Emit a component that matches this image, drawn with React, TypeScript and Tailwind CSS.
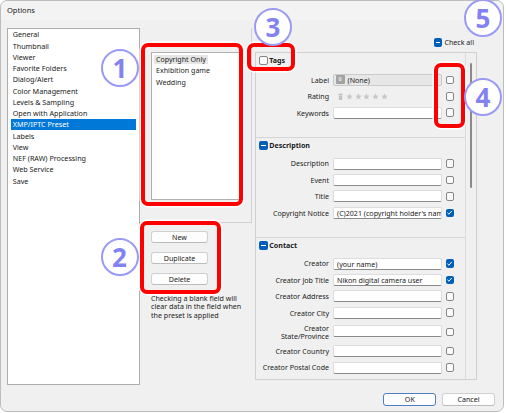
import React from "react";

const Box = ({ checked }: { checked?: boolean }) =>
  checked ? (
    <span className="flex h-[8.5px] w-[8.5px] shrink-0 items-center justify-center rounded-[2px] bg-[#005fb8]">
      <svg viewBox="0 0 10 10" className="h-[7px] w-[7px]">
        <path d="M2 5.3 L4.2 7.4 L8.2 2.8" stroke="white" strokeWidth="1.4" fill="none" />
      </svg>
    </span>
  ) : (
    <span className="block h-[8.5px] w-[8.5px] shrink-0 rounded-[2px] border border-[#858585] bg-[#fbfbfb]" />
  );

const Minus = () => (
  <span className="flex h-[8.5px] w-[8.5px] shrink-0 items-center justify-center rounded-[2px] bg-[#005fb8]">
    <span className="block h-[1.2px] w-[4.5px] bg-white" />
  </span>
);

const Field = ({ text }: { text?: string }) => (
  <div className="h-[12px] w-[109px] overflow-hidden whitespace-nowrap rounded-[2px] border border-[#dcdcdc] border-b-[#8a8a8a] bg-white px-[3px] leading-[10.5px]">
    {text}
  </div>
);

const Row = ({
  label,
  children,
  checked,
  h = "h-[16.4px]",
}: {
  label: React.ReactNode;
  children: React.ReactNode;
  checked?: boolean;
  h?: string;
}) => (
  <div className={`flex ${h} items-center`}>
    <div className="w-[77px] shrink-0 pr-[4px] text-right leading-[8.4px]">{label}</div>
    {children}
    <div className="ml-[3.7px]">
      <Box checked={checked} />
    </div>
  </div>
);

const Header = ({ title, minus }: { title: string; minus?: boolean }) => (
  <div className="flex h-[15px] items-center gap-[1.8px] pl-[3px] font-bold">
    {minus ? <Minus /> : <Box />}
    <span>{title}</span>
  </div>
);

const Star = () => (
  <svg viewBox="0 0 10 10" className="h-[7px] w-[7px]">
    <polygon points="5,0.5 6.3,3.6 9.6,3.8 7.1,6 7.9,9.3 5,7.5 2.1,9.3 2.9,6 0.4,3.8 3.7,3.6" fill="#c8c8c8" />
  </svg>
);

const RedBox = ({ c }: { c: string }) => (
  <div className={`pointer-events-none absolute rounded-[7px] border-[4px] border-[#ff0000] shadow-[0_0_0_1.5px_#ffffff] ${c}`} />
);

const Circle = ({ n, c }: { n: string; c: string }) => (
  <div
    className={`absolute flex h-[38px] w-[38px] items-center justify-center rounded-full border-[2.5px] border-[#9a9af5] bg-white text-[26px] font-bold leading-none text-[#8282f0] ${c}`}
  >
    {n}
  </div>
);

const navItems = [
  "General",
  "Thumbnail",
  "Viewer",
  "Favorite Folders",
  "Dialog/Alert",
  "Color Management",
  "Levels & Sampling",
  "Open with Application",
  "XMP/IPTC Preset",
  "Labels",
  "View",
  "NEF (RAW) Processing",
  "Web Service",
  "Save",
];

export default function App() {
  return (
    <div className="h-[413px] w-[506px] bg-white font-['Noto_Sans','Open_Sans',sans-serif] text-[7.1px] text-[#1b1b1b]">
      <div className="relative flex h-[412px] w-[504px] flex-col rounded-[7px] border border-[#bdbdbd] bg-[#f0f0f0]">
        {/* title bar */}
        <div className="flex h-[19px] items-center rounded-t-[7px] bg-[#f3f3f3] pl-[6px] text-[7.5px]">Options</div>

        {/* body */}
        <div className="flex pt-[8px]">
          {/* nav list */}
          <div className="ml-[6px] h-[357px] w-[133px] border border-[#adadad] bg-white">
            {navItems.map((it) => (
              <div
                key={it}
                className={`mx-[3px] flex h-[11.27px] items-center pl-[1.7px] text-[7.2px] ${
                  it === "XMP/IPTC Preset" ? "bg-[#0078d7] text-white" : ""
                }`}
              >
                {it}
              </div>
            ))}
          </div>

          {/* middle column */}
          <div className="w-[115px]">
            <div className="h-[195px] w-[112px] border-b border-r border-[#d2d2d2] pl-[11px] pt-[24px]">
              <div className="h-[148px] w-[89px] border border-[#b0b0b0] bg-white pt-[1px]">
                {["Copyright Only", "Exhibition game", "Wedding"].map((p, i) => (
                  <div key={p} className="flex h-[11.3px] items-center pl-[2px]">
                    <span className={`px-[2px] leading-[9.3px] ${i === 0 ? "bg-[#e6e6e6]" : ""}`}>{p}</span>
                  </div>
                ))}
              </div>
            </div>
            <div className="flex flex-col gap-[9px] pl-[11px] pt-[8px]">
              {["New", "Duplicate", "Delete"].map((b) => (
                <div
                  key={b}
                  className="flex h-[12px] w-[57px] items-center justify-center rounded-[3px] border border-[#d0d0d0] border-b-[#bcbcbc] bg-[#fdfdfd]"
                >
                  {b}
                </div>
              ))}
            </div>
            <div className="whitespace-nowrap pl-[11px] pt-[8.6px] leading-[8.7px]">
              Checking a blank field will
              <br />
              clear data in the field when
              <br />
              the preset is applied
            </div>
          </div>

          {/* right column */}
          <div className="w-[222px]">
            <div className="mt-[10px] flex h-[9px] items-center justify-end gap-[2px] pr-[3px]">
              <Minus />
              <span>Check all</span>
            </div>
            <div className="mt-[5px] flex h-[328px] w-[222px] border border-[#d0d0d0]">
              <div className="w-[210px] overflow-hidden border-r border-[#dcdcdc]">
                {/* Tags */}
                <div className="border-b border-[#d6d6d6] pb-[16px]">
                  <Header title="Tags" />
                  <div className="pt-[3.75px]">
                    <Row label="Label">
                      <div className="flex h-[12px] w-[109px] items-center gap-[3px] rounded-[2px] border border-[#cacaca] bg-[#e7e7e7] pl-[1.5px]">
                        <span className="flex h-[9px] w-[9px] items-center justify-center rounded-[1px] bg-[#a3a3a3] text-[5.5px] font-bold leading-none text-[#e9e9e9]">
                          0
                        </span>
                        <span>(None)</span>
                      </div>
                    </Row>
                    <Row label="Rating">
                      <div className="flex h-[12px] w-[109px] items-center pl-[5px]">
                        <svg viewBox="0 0 6 8" className="mr-[3px] h-[7.5px] w-[5px]">
                          <rect x="0.3" y="1" width="5.4" height="1" fill="#b5b5b5" />
                          <rect x="2" y="0" width="2" height="1" fill="#b5b5b5" />
                          <rect x="0.9" y="2.4" width="4.2" height="5.4" rx="0.6" fill="#c2c2c2" />
                        </svg>
                        <div className="flex gap-[1.7px]">
                          <Star />
                          <Star />
                          <Star />
                          <Star />
                          <Star />
                        </div>
                      </div>
                    </Row>
                    <Row label="Keywords">
                      <Field />
                    </Row>
                  </div>
                </div>

                {/* Description */}
                <div className="border-b border-[#d6d6d6] pb-[15.9px]">
                  <Header title="Description" minus />
                  <div className="pt-[2.5px]">
                    <Row label="Description">
                      <Field />
                    </Row>
                    <Row label="Event">
                      <Field />
                    </Row>
                    <Row label="Title">
                      <Field />
                    </Row>
                    <Row label="Copyright Notice" checked>
                      <Field text="(C)2021 (copyright holder's name)" />
                    </Row>
                  </div>
                </div>

                {/* Contact */}
                <div>
                  <Header title="Contact" minus />
                  <div className="pt-[2.5px]">
                    <Row label="Creator" checked>
                      <Field text="(your name)" />
                    </Row>
                    <Row label="Creator Job Title" checked>
                      <Field text="Nikon digital camera user" />
                    </Row>
                    <Row label="Creator Address">
                      <Field />
                    </Row>
                    <Row label="Creator City">
                      <Field />
                    </Row>
                    <Row
                      h="h-[22px]"
                      label={
                        <>
                          Creator
                          <br />
                          State/Province
                        </>
                      }
                    >
                      <div className="h-[13px]">
                        <Field />
                      </div>
                    </Row>
                    <Row label="Creator Country">
                      <Field />
                    </Row>
                    <Row label="Creator Postal Code">
                      <Field />
                    </Row>
                  </div>
                </div>
              </div>
              {/* scrollbar */}
              <div className="flex-1 pl-[3.5px] pt-[10px]">
                <div className="h-[125px] w-[2px] rounded-full bg-[#8a8a8a]" />
              </div>
            </div>
          </div>
        </div>

        {/* bottom buttons */}
        <div className="mt-[8px] flex justify-end gap-[5.7px] pr-[8px]">
          <div className="flex h-[13px] w-[53px] items-center justify-center rounded-[3px] border border-[#4f7dc2] bg-[#fdfdfd]">
            OK
          </div>
          <div className="flex h-[13px] w-[53px] items-center justify-center rounded-[3px] border border-[#d0d0d0] border-b-[#bcbcbc] bg-[#fdfdfd]">
            Cancel
          </div>
        </div>

        {/* annotations */}
        <RedBox c="left-[140px] top-[42px] h-[163px] w-[102px]" />
        <RedBox c="left-[139px] top-[220px] h-[73px] w-[81px]" />
        <RedBox c="left-[246px] top-[42px] h-[28px] w-[48px]" />
        <RedBox c="left-[433px] top-[62px] h-[65px] w-[31px]" />
        <Circle n="1" c="left-[100px] top-[48px]" />
        <Circle n="2" c="left-[99.5px] top-[237px]" />
        <Circle n="3" c="left-[253px] top-[6.5px]" />
        <Circle n="4" c="left-[463px] top-[77px]" />
        <Circle n="5" c="left-[463px] top-[-2px]" />
      </div>
    </div>
  );
}
